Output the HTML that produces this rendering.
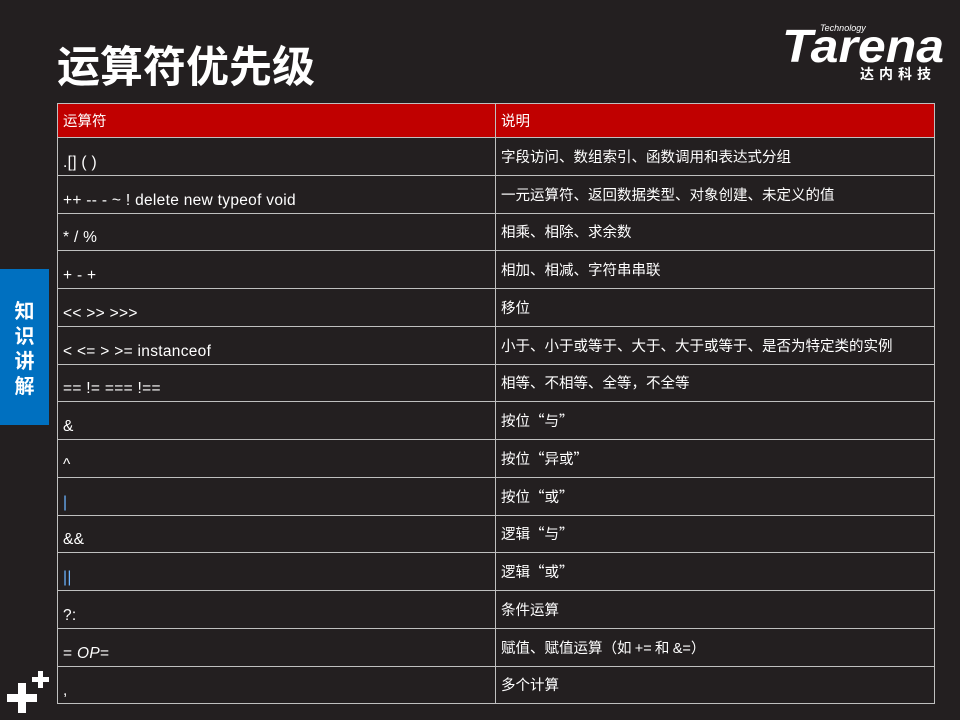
<!DOCTYPE html>
<html><head><meta charset="utf-8"><style>
body{margin:0;width:960px;height:720px;background:#231f20;position:relative;overflow:hidden;font-family:"Liberation Sans","Noto Sans CJK SC",sans-serif;color:#fff}
.title{position:absolute;left:57px;top:36px;font-size:43px;font-weight:bold;font-family:"Noto Sans CJK SC",sans-serif;line-height:56px}
.logo{position:absolute;left:780px;top:20px;width:170px;height:66px}
.tab{position:absolute;left:0;top:269px;width:49px;height:156px;background:#0070c0;font-family:"Noto Sans CJK SC",sans-serif;font-weight:bold;font-size:20px;line-height:25px;text-align:center;padding-top:28px;box-sizing:border-box}
table{position:absolute;left:57px;top:103px;border-collapse:collapse;width:878px;table-layout:fixed}
td{border:1px solid #bfbfbf;height:37.75px;padding:0 0 0 5px;font-size:14px;box-sizing:border-box}
td.l{vertical-align:bottom;padding-bottom:3px;font-size:15.5px;letter-spacing:0.3px}
tr.h td{background:#c00000;height:34px;vertical-align:middle;padding-bottom:0;font-family:"Noto Sans CJK SC",sans-serif;font-size:14.5px}
td.r{vertical-align:middle;font-family:"Noto Sans CJK SC",sans-serif;font-size:14.5px}
td.r span{font-family:"Liberation Sans",sans-serif}
</style></head><body>
<div class="title">运算符优先级</div>
<svg class="logo" viewBox="0 0 170 66">
<text x="40" y="11" font-family="Liberation Sans" font-style="italic" font-size="9" fill="#fff">Technology</text>
<text x="2" y="42" font-family="Liberation Sans" font-style="italic" font-weight="bold" font-size="46" fill="#fff" textLength="162" lengthAdjust="spacingAndGlyphs">Tarena</text>
<text x="80" y="59" font-family="Noto Sans CJK SC" font-weight="bold" font-size="14" fill="#fff" letter-spacing="5">达内科技</text>
</svg>
<div class="tab">知<br>识<br>讲<br>解</div>
<table>
<colgroup><col style="width:438px"><col></colgroup>
<tr class="h"><td>运算符</td><td>说明</td></tr>
<tr><td class="l">.[] ( )</td><td class="r">字段访问、数组索引、函数调用和表达式分组</td></tr>
<tr><td class="l">++ -- - ~ ! delete new typeof void</td><td class="r">一元运算符、返回数据类型、对象创建、未定义的值</td></tr>
<tr><td class="l">* / %</td><td class="r">相乘、相除、求余数</td></tr>
<tr><td class="l">+ - +</td><td class="r">相加、相减、字符串串联</td></tr>
<tr><td class="l">&lt;&lt; &gt;&gt; &gt;&gt;&gt;</td><td class="r">移位</td></tr>
<tr><td class="l">&lt; &lt;= &gt; &gt;= instanceof</td><td class="r">小于、小于或等于、大于、大于或等于、是否为特定类的实例</td></tr>
<tr><td class="l">== != === !==</td><td class="r">相等、不相等、全等，不全等</td></tr>
<tr><td class="l">&amp;</td><td class="r">按位“与”</td></tr>
<tr><td class="l">^</td><td class="r">按位“异或”</td></tr>
<tr><td class="l" style="color:#6cb4ff">|</td><td class="r">按位“或”</td></tr>
<tr><td class="l">&amp;&amp;</td><td class="r">逻辑“与”</td></tr>
<tr><td class="l" style="color:#6cb4ff">||</td><td class="r">逻辑“或”</td></tr>
<tr><td class="l">?:</td><td class="r">条件运算</td></tr>
<tr><td class="l">= <i>OP</i>=</td><td class="r">赋值、赋值运算（如 <span>+=</span> 和 <span>&amp;=</span>）</td></tr>
<tr><td class="l">,</td><td class="r">多个计算</td></tr>
</table>
<svg style="position:absolute;left:0;top:660px" width="60" height="60" viewBox="0 0 60 60">
<rect x="7" y="34" width="30" height="8" fill="#fff"/><rect x="18" y="23" width="8" height="30" fill="#fff"/>
<rect x="32" y="17" width="17" height="5" fill="#fff"/><rect x="38" y="11" width="5" height="17" fill="#fff"/>
</svg>
</body></html>
